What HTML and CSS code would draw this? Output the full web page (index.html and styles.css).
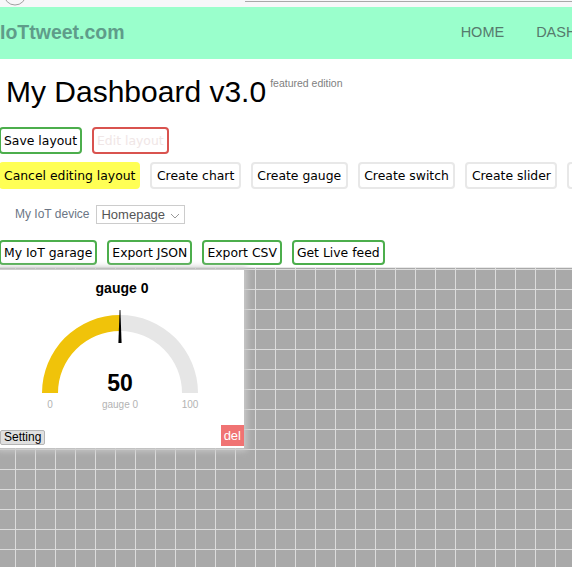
FILE: index.html
```html
<!DOCTYPE html>
<html lang="en">
<head>
  <meta charset="UTF-8">
  <title>IoTtweet - My Dashboard</title>
  <link rel="stylesheet" href="styles.css">
</head>
<body>
  <div class="chrome">
    <svg class="chrome-tab" width="40" height="7" viewBox="0 0 40 7"><circle cx="15" cy="-6" r="11" fill="none" stroke="#a0a0a0" stroke-width="1"/></svg>
    <div class="chrome-addr"></div>
  </div>

  <div class="navbar">
    <div class="brand">IoTtweet.com</div>
    <div class="nav-links">
      <span>HOME</span>
      <span>DASHBOARD</span>
    </div>
  </div>

  <h1 class="page-title">My Dashboard v3.0<sup>featured edition</sup></h1>

  <div class="btn-row row-1">
    <button class="btn btn-green">Save layout</button>
    <button class="btn btn-red" disabled>Edit layout</button>
  </div>

  <div class="btn-row row-2">
    <button class="btn btn-yellow">Cancel editing layout</button>
    <button class="btn btn-grey">Create chart</button>
    <button class="btn btn-grey">Create gauge</button>
    <button class="btn btn-grey">Create switch</button>
    <button class="btn btn-grey">Create slider</button>
    <button class="btn btn-grey">Create label</button>
  </div>

  <div class="device-row">
    <label>My IoT device</label>
    <div class="select">Homepage
      <svg width="10" height="6" viewBox="0 0 10 6"><path d="M1 1 L5 5 L9 1" fill="none" stroke="#999" stroke-width="1"/></svg>
    </div>
  </div>

  <div class="btn-row row-3">
    <button class="btn btn-green">My IoT garage</button>
    <button class="btn btn-green">Export JSON</button>
    <button class="btn btn-green">Export CSV</button>
    <button class="btn btn-green">Get Live feed</button>
  </div>

  <div class="grid-stack">
    <div class="widget">
      <div class="widget-title">gauge 0</div>
      <svg class="gauge" width="244" height="115" viewBox="0 0 244 115">
        <path d="M42 93 A78 78 0 0 1 120 15 L120 31 A62 62 0 0 0 58 93 Z" fill="#f0c30a"/>
        <path d="M120 15 A78 78 0 0 1 198 93 L182 93 A62 62 0 0 0 120 31 Z" fill="#e6e6e6"/>
        <polygon points="119.6,10 120.4,10 121.6,43 118.4,43" fill="#000"/>
        <text x="120" y="91" text-anchor="middle" class="g-value">50</text>
        <text x="50" y="108" text-anchor="middle" class="g-label">0</text>
        <text x="120" y="108" text-anchor="middle" class="g-label">gauge 0</text>
        <text x="190" y="108" text-anchor="middle" class="g-label">100</text>
      </svg>
      <div class="widget-foot">
        <button class="btn-setting">Setting</button>
        <button class="btn-del">del</button>
      </div>
    </div>
  </div>
</body>
</html>
```

FILE: styles.css
```css
html, body {
  margin: 0;
  padding: 0;
}

body {
  width: 572px;
  height: 567px;
  overflow: hidden;
  font-family: "Liberation Sans", Arial, sans-serif;
  background-color: #fff;
}

.chrome {
  display: flex;
  height: 7px;
  background-color: #f7f7f9;
}

.chrome-tab {
  display: block;
}

.chrome-addr {
  margin-left: 205px;
  flex: 1;
  height: 1px;
  border-bottom: 1px solid #a8a8a8;
}

.navbar {
  display: flex;
  align-items: center;
  justify-content: space-between;
  height: 52px;
  overflow: hidden;
  background-color: #9affcc;
}

.brand {
  font-size: 19.5px;
  font-weight: bold;
  color: #5f9c8a;
  padding-bottom: 2px;
}

.nav-links {
  display: flex;
  gap: 32px;
  margin-right: -56px;
  font-size: 14.5px;
  color: #567a6d;
  padding-bottom: 2px;
  white-space: nowrap;
}

.page-title {
  margin: 6px 0 0 6px;
  font-size: 30px;
  font-weight: normal;
  color: #000;
  line-height: 36px;
}

.page-title sup {
  font-size: 10.5px;
  color: #808080;
  margin-left: 4px;
  vertical-align: 15px;
}

.btn-row {
  display: flex;
  gap: 10px;
  margin-left: -1px;
  white-space: nowrap;
}

.row-1 {
  margin-top: 17px;
}

.row-2 {
  margin-top: 8px;
  overflow: hidden;
}

.btn {
  font-family: "DejaVu Sans", Verdana, sans-serif;
  font-size: 12.4px;
  line-height: 15px;
  padding: 4px 3px;
  border: 2px solid #ddd;
  border-radius: 4px;
  background-color: #fff;
  color: #000;
  flex: none;
}

.btn-green {
  border-color: #4cae4c;
}

.btn-red {
  border-color: #d9534f;
  color: #f0e6e6;
}

.btn-yellow {
  background-color: #ffff55;
  border-color: #ffff55;
}

.btn-grey {
  border-color: #e8e8e8;
  padding: 4px 4.5px;
}

.device-row {
  display: flex;
  align-items: center;
  gap: 7px;
  margin: 15px 0 0 15px;
  height: 20px;
}

.device-row label {
  font-size: 12px;
  color: #6b7685;
}

.select {
  display: flex;
  align-items: center;
  justify-content: space-between;
  box-sizing: border-box;
  width: 89px;
  height: 19px;
  padding: 0 4px;
  border: 1px solid #ccc;
  font-size: 13px;
  color: #555;
}

.select svg {
  margin-top: 3px;
}

.row-3 {
  margin-top: 16px;
}

.row-3 .btn {
  padding: 3px 3px;
}

.grid-stack {
  position: relative;
  height: 310px;
  margin-top: 2px;
  border-top: 1px solid #e8e8e8;
  background-color: #a9a9a9;
  background-image:
    linear-gradient(to right, #dcdcdc 1px, transparent 1px),
    linear-gradient(to bottom, #dcdcdc 1px, transparent 1px);
  background-size: 20px 20px;
  background-position: 15px 21px;
}

/* widgets sit on the free grid canvas */
.widget {
  position: absolute;
  left: 0;
  top: 2px;
  width: 244px;
  height: 178px;
  display: flex;
  flex-direction: column;
  background-color: #fff;
  box-shadow: 0 0 6px 3px #c9c9c9;
}

.widget-title {
  margin-top: 8px;
  padding-bottom: 2px;
  height: 20px;
  line-height: 20px;
  text-align: center;
  font-size: 14px;
  font-weight: bold;
  color: #000;
}

.gauge {
  display: block;
}

.g-value {
  font-family: "Liberation Sans", Arial, sans-serif;
  font-size: 23px;
  font-weight: bold;
  fill: #000;
}

.g-label {
  font-family: "Liberation Sans", Arial, sans-serif;
  font-size: 10px;
  fill: #b3b3b3;
}

.widget-foot {
  display: flex;
  justify-content: space-between;
  align-items: flex-end;
  margin-top: 10px;
}

.btn-setting {
  height: 15px;
  padding: 0 3px;
  margin-bottom: 1px;
  font-family: "Liberation Sans", Arial, sans-serif;
  font-size: 12px;
  line-height: 13px;
  background-color: #e0e0e0;
  border: 1px solid #b5b5b5;
  border-radius: 2px;
  color: #000;
}

.btn-del {
  height: 21px;
  padding: 0 3px;
  font-family: "Liberation Sans", Arial, sans-serif;
  font-size: 13px;
  background-color: #f07373;
  border: none;
  color: #fff;
}
```
